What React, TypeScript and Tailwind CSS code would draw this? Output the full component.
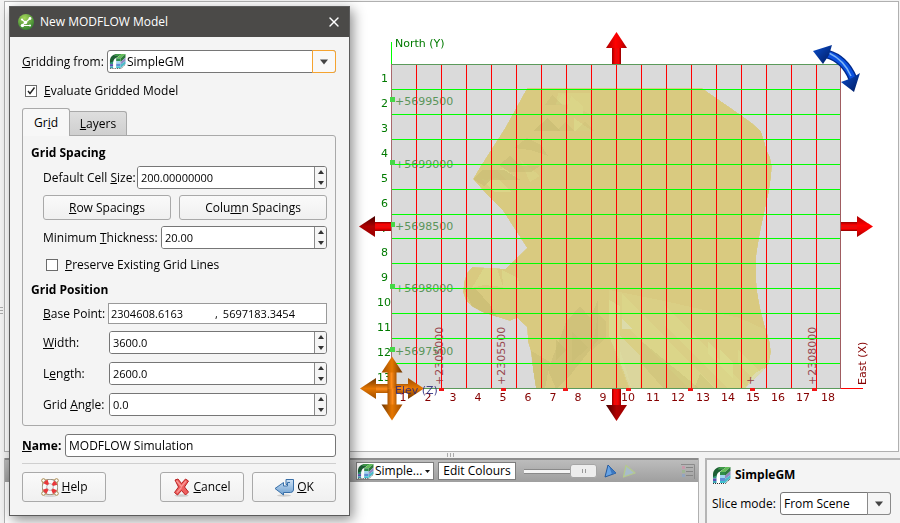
import { useState } from 'react'
import type { ReactNode } from 'react'
import { X } from 'lucide-react'
import clsx from 'clsx'

const CELL = 25
const GRID = { left: 391, top: 64, right: 841, bottom: 389 }

const columns = Array.from({ length: 18 }, (_, i) => i + 1)
const rows = Array.from({ length: 13 }, (_, i) => i + 1)

// y of each inner row line, the scene rounds some of them down a pixel
const rowLines = [89, 114, 139, 164, 189, 214, 238, 263, 288, 313, 338, 363]

const northTicks = [
  { y: 99, label: '+5699500' },
  { y: 162, label: '+5699000' },
  { y: 224, label: '+5698500' },
  { y: 286, label: '+5698000' },
  { y: 349, label: '+5697500' },
]

const eastTicks = [
  { x: 441, label: '+2305000' },
  { x: 503, label: '+2305500' },
  { x: 565, label: '' },
  { x: 628, label: '' },
  { x: 690, label: '' },
  { x: 752, label: '+' },
  { x: 814, label: '+2308000' },
]

const MODEL_OUTLINE =
  'M527 88H702L715 97L741 115L752 123L761 131L764 140L767 151L770 157L772 166L771 178L769 192L766 205L764 215L761 228L758 245L756 258V275L757 290L760 307L764 323L768 336L770 343L771 352L769 363L765 369L754 379L748 385L745 389H536L533 370L531 352L528 342L527 327L520 321L517 318L510 321L497 317L484 313L473 307L466 301L463 292L464 282L467 273L472 267L495 268L505 269L527 248L503 211L488 196L473 179L480 167L505 128Z'

/* ---------- icons ---------- */

function GeoModelIcon({ className }: { className?: string }) {
  return (
    <svg className={className} viewBox="0 0 19 18" aria-hidden="true">
      <path d="M1 17V7L7 1H18V12L13 17Z" fill="#fff" />
      {/* arch behind the block */}
      <path d="M1 12V8C1.500 4 4 1.500 8 1H14L8 5.500C6 6 5 8 4.500 10.500Z" fill="#1e5f35" />
      <path d="M8 1H14L10 3.500H5.500Z" fill="#3f9a48" />
      <path d="M1 11L4.500 9.500V12.500H1Z" fill="#2f9a7c" />
      <path d="M1 12.500H4.500V15H1Z" fill="#5a4fb0" />
      <path d="M1 15H4.500V17H1Z" fill="#3aa3b5" />
      {/* block */}
      <path d="M8 6L14 1H18.500L13 6Z" fill="#63bd58" />
      <path d="M8 6H13V9H8Z" fill="#2f8c4a" />
      <path d="M8 9H13V12H8Z" fill="#9fd6ee" />
      <path d="M8 12H13V15H8Z" fill="#5e8fd6" />
      <path d="M8 15H13V17H8Z" fill="#3fc0cf" />
      <path d="M13 6L18.500 1V5L13 10Z" fill="#2d7a3c" />
      <path d="M13 10L18.500 5V9L13 13Z" fill="#9088c4" />
      <path d="M13 13L18.500 9V12L13 17Z" fill="#4bbac8" />
      <path d="M1 17.500H13.500L18.500 12.500" fill="none" stroke="#333" strokeDasharray="1 1" />
    </svg>
  )
}

function AppIcon() {
  return (
    <svg className="size-4" viewBox="0 0 16 16" aria-hidden="true">
      <defs>
        <radialGradient id="app" cx=".4" cy=".25" r=".8">
          <stop offset="0" stopColor="#a5d65a" />
          <stop offset="1" stopColor="#2f7d2c" />
        </radialGradient>
      </defs>
      <circle cx="8" cy="8" r="8" fill="url(#app)" />
      <path d="M4 5.500L7.500 8.500L12 4.500M7.500 8.500L4 11.500H12" fill="none" stroke="#fff" strokeWidth="1.200" />
      <g fill="#fff">
        <circle cx="4" cy="5.500" r="1.100" />
        <circle cx="12" cy="4.500" r="1.400" />
        <circle cx="7.500" cy="8.500" r="1.700" />
        <circle cx="4.500" cy="11.500" r="1.700" />
        <circle cx="12" cy="11.500" r="1.100" />
      </g>
    </svg>
  )
}

function HelpIcon() {
  return (
    <svg className="h-[19px] w-[18px]" viewBox="0 0 18 19" aria-hidden="true">
      <path d="M2.500 2.500Q9 .5 15.500 2.500Q17.500 9 15.500 15.500Q9 17.500 2.500 15.500Q.5 9 2.500 2.500Z" fill="none" stroke="#b99a63" strokeWidth="1.200" />
      <g fill="#fff" stroke="#a8874c">
        <circle cx="2.500" cy="2.500" r="1.800" />
        <circle cx="15.500" cy="2.500" r="1.800" />
        <circle cx="2.500" cy="15.500" r="1.800" />
        <circle cx="15.500" cy="15.500" r="1.800" />
      </g>
      <circle cx="9" cy="9" r="5.400" fill="none" stroke="#8d8d8d" strokeWidth="5" />
      <circle cx="9" cy="9" r="5.400" fill="none" stroke="#fafafa" strokeWidth="3.800" />
      <circle cx="9" cy="9" r="5.400" fill="none" stroke="#e8383a" strokeWidth="4.400" strokeDasharray="3.600 4.882" strokeDashoffset="-2.441" />
      <ellipse cx="9" cy="18" rx="6" ry="1" fill="#000" opacity=".12" />
    </svg>
  )
}

function CancelIcon() {
  return (
    <svg className="h-[19px] w-[17px]" viewBox="0 0 17 19" aria-hidden="true">
      <ellipse cx="8.500" cy="17.500" rx="7" ry="1.300" fill="#000" opacity=".15" />
      <path
        d="M2 2L5 1L8.500 5.500L12.500 1L15.500 3L11.500 9L15.500 14L12.500 17L8.500 12.500L4.500 17L1.500 14.500L5.500 9Z"
        fill="#ee5f5f"
        stroke="#b92222"
        strokeLinejoin="round"
      />
      <path d="M3.500 2.800L8.500 8.500L13 3.200M4 14.500L8.500 9.500" fill="none" stroke="#f99a96" strokeWidth="1.300" />
    </svg>
  )
}

function OkIcon() {
  return (
    <svg className="h-[19px] w-[20px]" viewBox="0 0 20 19" aria-hidden="true">
      <defs>
        <linearGradient id="ok" x1="0" y1="0" x2="0" y2="1">
          <stop offset="0" stopColor="#cfe2f5" />
          <stop offset="1" stopColor="#6d9fd0" />
        </linearGradient>
      </defs>
      <ellipse cx="10" cy="17.500" rx="7" ry="1.200" fill="#000" opacity=".15" />
      <path
        d="M12 1.500H19.500V12Q19 14.500 16.500 14.500H9.500V17L1 10.500L9.500 4.500V8H13.500V6.500H12Z"
        fill="url(#ok)"
        stroke="#386fa8"
        strokeLinejoin="round"
      />
      <path d="M13.500 8V4.500H16" fill="none" stroke="#386fa8" />
    </svg>
  )
}

function Caret({ up = false }: { up?: boolean }) {
  return (
    <svg className="h-1 w-[6px]" viewBox="0 0 6 4" aria-hidden="true">
      <path d={up ? 'M0 4L3 0L6 4Z' : 'M0 0L3 4L6 0Z'} fill="#333" />
    </svg>
  )
}

function DropArrow() {
  return (
    <svg className="h-[6px] w-2" viewBox="0 0 8 6" aria-hidden="true">
      <path d="M0 .5H8L4 5.500Z" fill="#444" />
    </svg>
  )
}

/* ---------- form pieces ---------- */

function SpinField({ id, label, value, labelClass }: { id: string; label: ReactNode; value: string; labelClass: string }) {
  return (
    <div className="flex items-center">
      <label htmlFor={id} className={clsx('shrink-0 whitespace-nowrap', labelClass)}>
        {label}
      </label>
      <div className="flex h-[23px] min-w-0 flex-1 overflow-hidden rounded-[3px] border border-[#767676] bg-white">
        <input id={id} defaultValue={value} className="min-w-0 flex-1 bg-white px-[3px] text-[11px] outline-none" />
        <div className="flex w-3 flex-col border-l border-[#8a8a8a] bg-[#f5f5f5]">
          <button type="button" aria-label="Increase" className="flex flex-1 items-center justify-center">
            <Caret up />
          </button>
          <button type="button" aria-label="Decrease" className="flex flex-1 items-center justify-center">
            <Caret />
          </button>
        </div>
      </div>
    </div>
  )
}

function CheckField({ id, label, checked }: { id: string; label: ReactNode; checked?: boolean }) {
  return (
    <div className="flex h-4 items-center gap-[7px]">
      <span className="relative flex size-3">
        <input
          id={id}
          type="checkbox"
          defaultChecked={checked}
          className="peer size-3 appearance-none border border-[#6b6b6b] bg-white"
        />
        <svg className="pointer-events-none absolute inset-0 hidden size-3 peer-checked:block" viewBox="0 0 12 12">
          <path d="M3 6L5 8.500L9.500 2.500" fill="none" stroke="#222" strokeWidth="1.400" />
        </svg>
      </span>
      <label htmlFor={id}>{label}</label>
    </div>
  )
}

function PushButton({ children, className }: { children: ReactNode; className?: string }) {
  return (
    <button
      type="button"
      className={clsx(
        'flex items-center justify-center rounded-[3px] border border-[#a9a9a9] bg-linear-to-b from-[#fafafa] to-[#f0f0f0]',
        className,
      )}
    >
      {children}
    </button>
  )
}

/* ---------- dialog ---------- */

function ModelDialog() {
  const [tab, setTab] = useState('grid')

  return (
    <section
      role="dialog"
      aria-label="New MODFLOW Model"
      className="absolute top-[6px] left-[9px] w-[341px] border border-[#5b5b5b] bg-[#f4f4f4] shadow-[3px_4px_12px_rgba(0,0,0,0.45)]"
    >
      <header className="flex h-[30px] items-center bg-[#4b4a48] pr-[7px] pl-2 text-white">
        <AppIcon />
        <h1 className="ml-[6px] flex-1">New MODFLOW Model</h1>
        <button type="button" aria-label="Close">
          <X className="size-4" strokeWidth={2} />
        </button>
      </header>

      <form className="pt-[13px] pr-[13px] pb-[13px] pl-3">
        <div className="flex items-center">
          <label htmlFor="source" className="w-[85px] shrink-0 whitespace-nowrap">
            <u>G</u>ridding from:
          </label>
          <div className="relative flex h-[23px] flex-1">
            <select
              id="source"
              className="w-full appearance-none rounded-[3px] border border-[#767676] bg-white pl-[19px] outline-none"
            >
              <option>SimpleGM</option>
            </select>
            <GeoModelIcon className="pointer-events-none absolute top-[3px] left-[2px] h-4 w-[17px]" />
            <span className="pointer-events-none absolute inset-y-0 right-0 flex w-6 items-center justify-center rounded-r-[3px] border border-[#f5a32f] bg-[#f8f8f8]">
              <DropArrow />
            </span>
          </div>
        </div>

        <div className="mt-[10px] pl-[3px]">
          <CheckField id="evaluate" checked label={<><u>E</u>valuate Gridded Model</>} />
        </div>

        <div role="tablist" className="mt-[9px] flex items-end">
          <button
            type="button"
            role="tab"
            aria-selected={tab === 'grid'}
            onClick={() => setTab('grid')}
            className="z-10 -mb-px h-[28px] w-12 rounded-t-[3px] border border-b-0 border-[#a9a9a9] bg-[#f7f7f7]"
          >
            Gr<u>i</u>d
          </button>
          <button
            type="button"
            role="tab"
            aria-selected={tab === 'layers'}
            onClick={() => setTab('layers')}
            className="h-6 w-[57px] rounded-tr-[3px] border border-b-0 border-l-0 border-[#a9a9a9] bg-linear-to-b from-[#dedede] to-[#cfcfcf]"
          >
            <u>L</u>ayers
          </button>
        </div>

        <div className="rounded-b-[3px] rounded-tr-[3px] border border-[#a9a9a9] px-2 py-[9px]">
          <h2 className="h-4 leading-4 font-bold">Grid Spacing</h2>
          <div className="mt-[5px] flex flex-col gap-[6px] pl-3">
            <SpinField id="cell-size" labelClass="w-[94px]" label={<>Default Cell <u>S</u>ize:</>} value="200.00000000" />
            <div className="flex gap-2">
              <PushButton className="h-[25px] w-[128px]">
                <span><u>R</u>ow Spacings</span>
              </PushButton>
              <PushButton className="h-[25px] flex-1">
                <span>Colu<u>m</u>n Spacings</span>
              </PushButton>
            </div>
            <SpinField id="thickness" labelClass="w-[118px]" label={<>Minimum <u>T</u>hickness:</>} value="20.00" />
          </div>
          <div className="mt-2 pl-[15px]">
            <CheckField id="preserve" label={<><u>P</u>reserve Existing Grid Lines</>} />
          </div>

          <h2 className="mt-[9px] h-4 leading-4 font-bold">Grid Position</h2>
          <div className="mt-[5px] flex items-center pl-3">
            <label htmlFor="base-x" className="w-[65px] shrink-0 whitespace-nowrap">
              <u>B</u>ase Point:
            </label>
            <div className="flex h-[21px] flex-1 items-center border border-[#9a9a9a] bg-white pl-[2px] text-[11px]">
              <input id="base-x" defaultValue="2304608.6163" className="w-[104px] bg-white outline-none" />
              <span>,</span>
              <input aria-label="Base Point Y" defaultValue="5697183.3454" className="ml-[5px] w-0 flex-1 bg-white outline-none" />
            </div>
          </div>
          <div className="mt-[7px] flex flex-col gap-2 pl-3">
            <SpinField id="width" labelClass="w-[66px]" label={<><u>W</u>idth:</>} value="3600.0" />
            <SpinField id="length" labelClass="w-[66px]" label={<>L<u>e</u>ngth:</>} value="2600.0" />
            <SpinField id="angle" labelClass="w-[66px]" label={<>Grid <u>A</u>ngle:</>} value="0.0" />
          </div>
        </div>

        <div className="mt-2 flex items-center">
          <label htmlFor="name" className="w-[43px] font-bold">
            <u>N</u>ame:
          </label>
          <input
            id="name"
            defaultValue="MODFLOW Simulation"
            className="h-[23px] w-0 flex-1 rounded-[3px] border border-[#767676] bg-white px-[3px] outline-none"
          />
        </div>

        <div className="mt-[6px] flex gap-2 border-t border-[#cfcfcf] pt-2">
          <PushButton className="mr-auto h-[30px] w-[84px] gap-[3px]">
            <HelpIcon />
            <span><u>H</u>elp</span>
          </PushButton>
          <PushButton className="h-[30px] w-[84px] gap-[3px]">
            <CancelIcon />
            <span><u>C</u>ancel</span>
          </PushButton>
          <PushButton className="h-[30px] w-[84px] gap-[3px]">
            <OkIcon />
            <span><u>O</u>K</span>
          </PushButton>
        </div>
      </form>
    </section>
  )
}

/* ---------- 3D scene ---------- */

// Points up from the origin: shaft first, then the cone
function Arrow({ x, y, angle, shaft, head }: { x: number; y: number; angle: number; shaft: string; head: string }) {
  return (
    <g transform={`translate(${x} ${y}) rotate(${angle})`}>
      <path d="M-4.500 0H4.500V-17H-4.500Z" fill={shaft} />
      <path d="M-10.500 -16H10.500L0 -32Z" fill={head} />
    </g>
  )
}

function ModelSurface() {
  return (
    <g clipPath="url(#model)" shapeRendering="crispEdges">
      <path d={MODEL_OUTLINE} fill="#d9ca80" />
      {/* pale facets along the north-west ridge */}
      <g fill="#dbd98b" opacity=".75">
        <path d="M558 93H590V114L573 105H556Z" opacity=".6" />
        <path d="M563 93L572 104H556Z" />
        <path d="M571 96L583 106V114H566Z" />
        <path d="M574 118L592 131H574Z" />
        <path d="M485 180L497 178L512 192H495L480 178Z" />
        <path d="M503 168L520 180H507L497 171Z" />
        <path d="M520 160L540 176L530 182Z" opacity=".6" />
        <path d="M484 268H497L503 287L484 285L472 288Z" />
        <path d="M502 270L518 278L520 288H503Z" />
      </g>
      {/* pale southern slope, falling to the south-east */}
      <g fill="#dcdb8e">
        <path d="M609 290L660 300L740 318L766 330L770 362L745 389H629L609 336Z" opacity=".35" />
        <path d="M622 293L716 389H690L640 340L622 322Z" opacity=".5" />
        <path d="M665 306L748 389H728L665 326Z" opacity=".5" />
        <path d="M708 342L716 350V362L708 354Z" opacity=".8" />
        <path d="M720 350L733 363V379L720 366Z" opacity=".8" />
        <path d="M738 350L762 374L754 380L738 364Z" opacity=".6" />
        <path d="M609 300L620 306V350L632 389L609 336Z" opacity=".8" />
      </g>
      <g fill="#dcdbae">
        <path d="M622 318L632 329H622Z" opacity=".9" />
        <path d="M620 336L640 356V389H630L620 362Z" opacity=".6" />
        <path d="M745 389L754 374L764 368L758 389Z" />
      </g>
      {/* ridges and shaded facets */}
      <g fill="#c9bc74">
        <path d="M473 179L482 170L504 170L521 180H490L484 186Z" opacity=".65" />
        <path d="M499 165L510 156L521 166H540L531 172H510Z" opacity=".6" />
        <path d="M514 148L527 138L541 145L548 156L530 150Z" opacity=".5" />
        <path d="M533 131L548 118L560 131Z" opacity=".7" />
        <path d="M556 131L565 122L575 131Z" opacity=".4" />
        <path d="M545 105L552 95L562 105Z" opacity=".4" />
        <path d="M575 131L585 122L595 131Z" opacity=".3" />
        <path d="M464 289L476 289L490 305L497 317L473 309Z" opacity=".7" />
        <path d="M566 322L580 306L590 318L598 300V340L568 378L556 389L548 370Z" opacity=".55" />
        <path d="M530 350L550 362L545 389H536Z" opacity=".5" />
        <path d="M556 340L566 350L556 360Z" opacity=".7" />
        <path d="M572 332L588 348L572 362Z" opacity=".6" />
        <path d="M598 314L606 322V338L592 350Z" opacity=".4" />
        <path d="M640 340L700 389H664L640 362Z" opacity=".4" />
        <path d="M700 374L715 389H694Z" opacity=".4" />
      </g>
    </g>
  )
}

function Scene() {
  return (
    <svg
      className="h-[420px] w-[530px] shrink-0 font-['DejaVu_Sans',sans-serif] text-[11px]"
      viewBox="350 20 530 420"
      role="img"
      aria-label="Gridded model in plan view"
    >
      <defs>
        <clipPath id="model">
          <path d={MODEL_OUTLINE} />
        </clipPath>
        <linearGradient id="redShaft">
          <stop offset="0" stopColor="#900" />
          <stop offset=".35" stopColor="#f00" />
          <stop offset=".5" stopColor="#e01010" />
          <stop offset=".75" stopColor="#f00" />
          <stop offset="1" stopColor="#800" />
        </linearGradient>
        <linearGradient id="redHead">
          <stop offset="0" stopColor="#a00" />
          <stop offset=".45" stopColor="#f00" />
          <stop offset=".7" stopColor="#e80000" />
          <stop offset="1" stopColor="#900" />
        </linearGradient>
        <linearGradient id="darkHead">
          <stop offset="0" stopColor="#900" />
          <stop offset=".5" stopColor="#b00000" />
          <stop offset="1" stopColor="#400" />
        </linearGradient>
        <linearGradient id="orangeShaft">
          <stop offset="0" stopColor="#b35a00" />
          <stop offset=".45" stopColor="#ff8c1a" />
          <stop offset="1" stopColor="#a85300" />
        </linearGradient>
        <linearGradient id="orangeHead">
          <stop offset="0" stopColor="#9c4c00" />
          <stop offset=".5" stopColor="#e67700" />
          <stop offset="1" stopColor="#6b3400" />
        </linearGradient>
        <linearGradient id="blueHead" x1="0" y1="0" x2="1" y2="1">
          <stop offset="0" stopColor="#0a4fd0" />
          <stop offset="1" stopColor="#00195c" />
        </linearGradient>
      </defs>

      <rect x={GRID.left} y={GRID.top} width="450" height="325" fill="#dadada" />
      <ModelSurface />

      {/* tick labels lie under the grid lines */}
      <g fill="#5b955b">
        {northTicks.map((t) => (
          <text key={t.y} x="395" y={t.y + 6}>{t.label}</text>
        ))}
      </g>
      <g fill="#99484f">
        {eastTicks.map((t) => (
          <text key={t.x} transform={`translate(${t.x + 2} 385) rotate(-90)`}>{t.label}</text>
        ))}
      </g>

      <g shapeRendering="crispEdges">
        {columns.slice(1).map((c) => (
          <rect key={c} x={GRID.left + (c - 1) * CELL} y={GRID.top} width="1" height="325" fill="#f00" />
        ))}
        {rowLines.map((y) => (
          <rect key={y} x={GRID.left} y={y} width="450" height="1" fill="#0f0" />
        ))}
        <rect x="391" y="42" width="1" height="22" fill="#0f0" />
        <rect x="841" y="388" width="22" height="1" fill="#f00" />
        <rect x="391" y="64" width="450" height="1" fill="#5b9a5b" />
        <rect x="391" y="388" width="450" height="1" fill="#5b9a5b" />
        <rect x="391" y="64" width="1" height="325" fill="#a8686c" />
        <rect x="840" y="64" width="1" height="325" fill="#a05c60" />
        {northTicks.map((t) => (
          <rect key={t.y} x="390" y={t.y - 2} width="5" height="5" fill="#46d646" />
        ))}
        {eastTicks.map((t) => (
          <rect key={t.x} x={t.x - 2} y="388" width="5" height="3" fill="#f01818" />
        ))}
      </g>

      <text x="395" y="47" fill="#007a00">North (Y)</text>
      <text transform="translate(866 385) rotate(-90)" fill="#850000">East (X)</text>
      <g fill="#007a00" textAnchor="end">
        {rows.map((r, i) => (
          <text key={r} x={r > 9 ? 391 : 388} y={82 + i * CELL - (r > 7 ? 1 : 0)}>{r}</text>
        ))}
      </g>
      <g fill="#850000" textAnchor="middle">
        {columns.map((c, i) => (
          <text key={c} x={403 + i * CELL} y="401">{c}</text>
        ))}
      </g>

      <Arrow x={616.500} y={64} angle={0} shaft="url(#redShaft)" head="url(#redHead)" />
      <Arrow x={391} y={226.500} angle={-90} shaft="url(#redShaft)" head="url(#darkHead)" />
      <Arrow x={841} y={226.500} angle={90} shaft="url(#redShaft)" head="url(#redHead)" />
      <Arrow x={616.500} y={389} angle={180} shaft="url(#redShaft)" head="url(#darkHead)" />
      {[-90, 90, 180, 0].map((a) => (
        <Arrow key={a} x={392} y={388.500} angle={a} shaft="url(#orangeShaft)" head="url(#orangeHead)" />
      ))}
      <text x="395" y="394" fill="#26267a" opacity=".85">Elev (Z)</text>

      {/* rotate handle */}
      <g fill="none">
        <path d="M827 54Q845 59 853 79" stroke="#002a8c" strokeWidth="9" />
        <path d="M827 54Q845 59 853 79" stroke="#0a50e0" strokeWidth="6" />
        <path d="M829 53Q844 60 851 76" stroke="#7db4f5" strokeWidth="1.500" />
      </g>
      <path d="M813 51L832 45L829 55L823 64Z" fill="url(#blueHead)" />
      <path d="M854 92L841 82L852 78L860 73Z" fill="url(#blueHead)" />
    </svg>
  )
}

/* ---------- lower panels ---------- */

function ColourToolbar() {
  return (
    <div className="flex h-6 items-center justify-end border-t-2 border-[#8c8c8c] bg-linear-to-b from-[#bcbcbc] to-[#9f9f9f] pr-[3px]">
      <div className="relative mr-1 h-[18px] w-[78px]">
        <select
          aria-label="Colouring"
          className="size-full appearance-none border border-[#7d7d7d] bg-white pl-[18px] outline-none"
        >
          <option>Simple...</option>
        </select>
        <GeoModelIcon className="pointer-events-none absolute top-px left-px h-4 w-[17px]" />
        <svg className="pointer-events-none absolute top-2 right-1 h-[3px] w-[5px]" viewBox="0 0 5 3">
          <path d="M0 0H5L2.500 3Z" fill="#111" />
        </svg>
      </div>
      <button type="button" className="mr-2 h-[18px] w-[78px] border border-[#7d7d7d] bg-white">
        Edit Colours
      </button>
      {/* slider, with the grip marks drawn into the thumb */}
      <input
        type="range"
        aria-label="Opacity"
        defaultValue={98}
        className="mr-[6px] h-[14px] w-[74px] appearance-none bg-[linear-gradient(#8a8a8a_1px,#f4f4f4_1px,#f4f4f4_4px,#8a8a8a_4px)] bg-[length:50px_5px] bg-left bg-no-repeat [&::-webkit-slider-thumb]:h-[14px] [&::-webkit-slider-thumb]:w-[27px] [&::-webkit-slider-thumb]:appearance-none [&::-webkit-slider-thumb]:rounded-[3px] [&::-webkit-slider-thumb]:border [&::-webkit-slider-thumb]:border-[#a5a5a5] [&::-webkit-slider-thumb]:bg-[#ededed] [&::-webkit-slider-thumb]:bg-[linear-gradient(90deg,#999_1px,transparent_1px,transparent_3px,#999_3px)] [&::-webkit-slider-thumb]:bg-[length:4px_4px] [&::-webkit-slider-thumb]:bg-center [&::-webkit-slider-thumb]:bg-no-repeat"
      />
      <button type="button" aria-label="Show solid" className="mr-1">
        <svg className="h-[15px] w-[14px]" viewBox="0 0 14 15">
          <path d="M4 1L12 9L1 13Z" fill="#67a3e4" stroke="#25599c" strokeLinejoin="round" />
          <path d="M5 2L12 9L8 10.500Z" fill="#3c78c0" />
        </svg>
      </button>
      <button type="button" aria-label="Show edges" className="mr-[45px]">
        <svg className="h-[15px] w-[14px]" viewBox="0 0 14 15">
          <path d="M4 1.500L13 9L1.500 13Z" fill="#a9bccb" stroke="#b4c98e" strokeWidth="1.300" strokeLinejoin="round" />
        </svg>
      </button>
      <button type="button" aria-label="Legend">
        <svg className="h-[15px] w-[14px]" viewBox="0 0 14 15">
          <path d="M0 .5H13.500V15" fill="none" stroke="#8b8b8b" />
          <path d="M5 3.500H12M5 7.500H12M5 11.500H12" stroke="#858585" />
          <path d="M1 2H4V5H1Z" fill="#c99aab" />
          <path d="M1 6H4V9H1Z" fill="#9fb594" />
          <path d="M1 10H4V13H1Z" fill="#93a6bf" />
        </svg>
      </button>
    </div>
  )
}

function PropertiesPanel() {
  return (
    <aside className="w-[195px] shrink-0 border-t-2 border-l-2 border-[#b5b5b5] bg-[#f4f4f4] pt-[6px] pr-[9px] pl-[5px]">
      <div className="flex items-center gap-1">
        <GeoModelIcon className="h-[18px] w-[19px]" />
        <h2 className="font-bold">SimpleGM</h2>
      </div>
      <div className="mt-2 flex items-center justify-between">
        <label htmlFor="slice-mode" className="whitespace-nowrap">Slice mode:</label>
        <div className="relative h-[23px] w-[111px]">
          <select
            id="slice-mode"
            className="size-full appearance-none rounded-[3px] border border-[#767676] bg-white pl-[3px] outline-none"
          >
            <option>From Scene</option>
          </select>
          <span className="pointer-events-none absolute inset-y-0 right-0 flex w-6 items-center justify-center rounded-r-[3px] border border-[#8a8a8a] bg-[#f5f5f5]">
            <DropArrow />
          </span>
        </div>
      </div>
    </aside>
  )
}

export default function App() {
  return (
    <div className="relative flex h-screen min-h-[523px] flex-col overflow-hidden bg-[#f2f2f2] pt-px text-[12px] leading-4 text-black font-['Open_Sans','Noto_Sans',sans-serif]">
      <div className="flex min-h-0 flex-1">
        {/* splitter with its grip */}
        <div className="flex w-1 flex-col items-start justify-center gap-[2px] pt-[168px]">
          <div className="h-px w-[3px] bg-[#aaa]" />
          <div className="h-px w-[3px] bg-[#aaa]" />
          <div className="h-px w-[3px] bg-[#aaa]" />
        </div>
        <main className="mr-px flex flex-1 justify-end border border-[#b0b0b0] bg-white pt-[18px] pr-[18px]">
          <Scene />
        </main>
      </div>

      <div className="flex h-[6px] items-center justify-center gap-[2px]">
        <div className="h-1 w-px bg-[#aaa]" />
        <div className="h-1 w-px bg-[#aaa]" />
        <div className="h-1 w-px bg-[#aaa]" />
      </div>

      <div className="flex h-[65px] gap-[6px] pl-1">
        <section className="flex-1 border-x border-[#b0b0b0] bg-white">
          <ColourToolbar />
        </section>
        <PropertiesPanel />
      </div>

      <ModelDialog />
    </div>
  )
}
